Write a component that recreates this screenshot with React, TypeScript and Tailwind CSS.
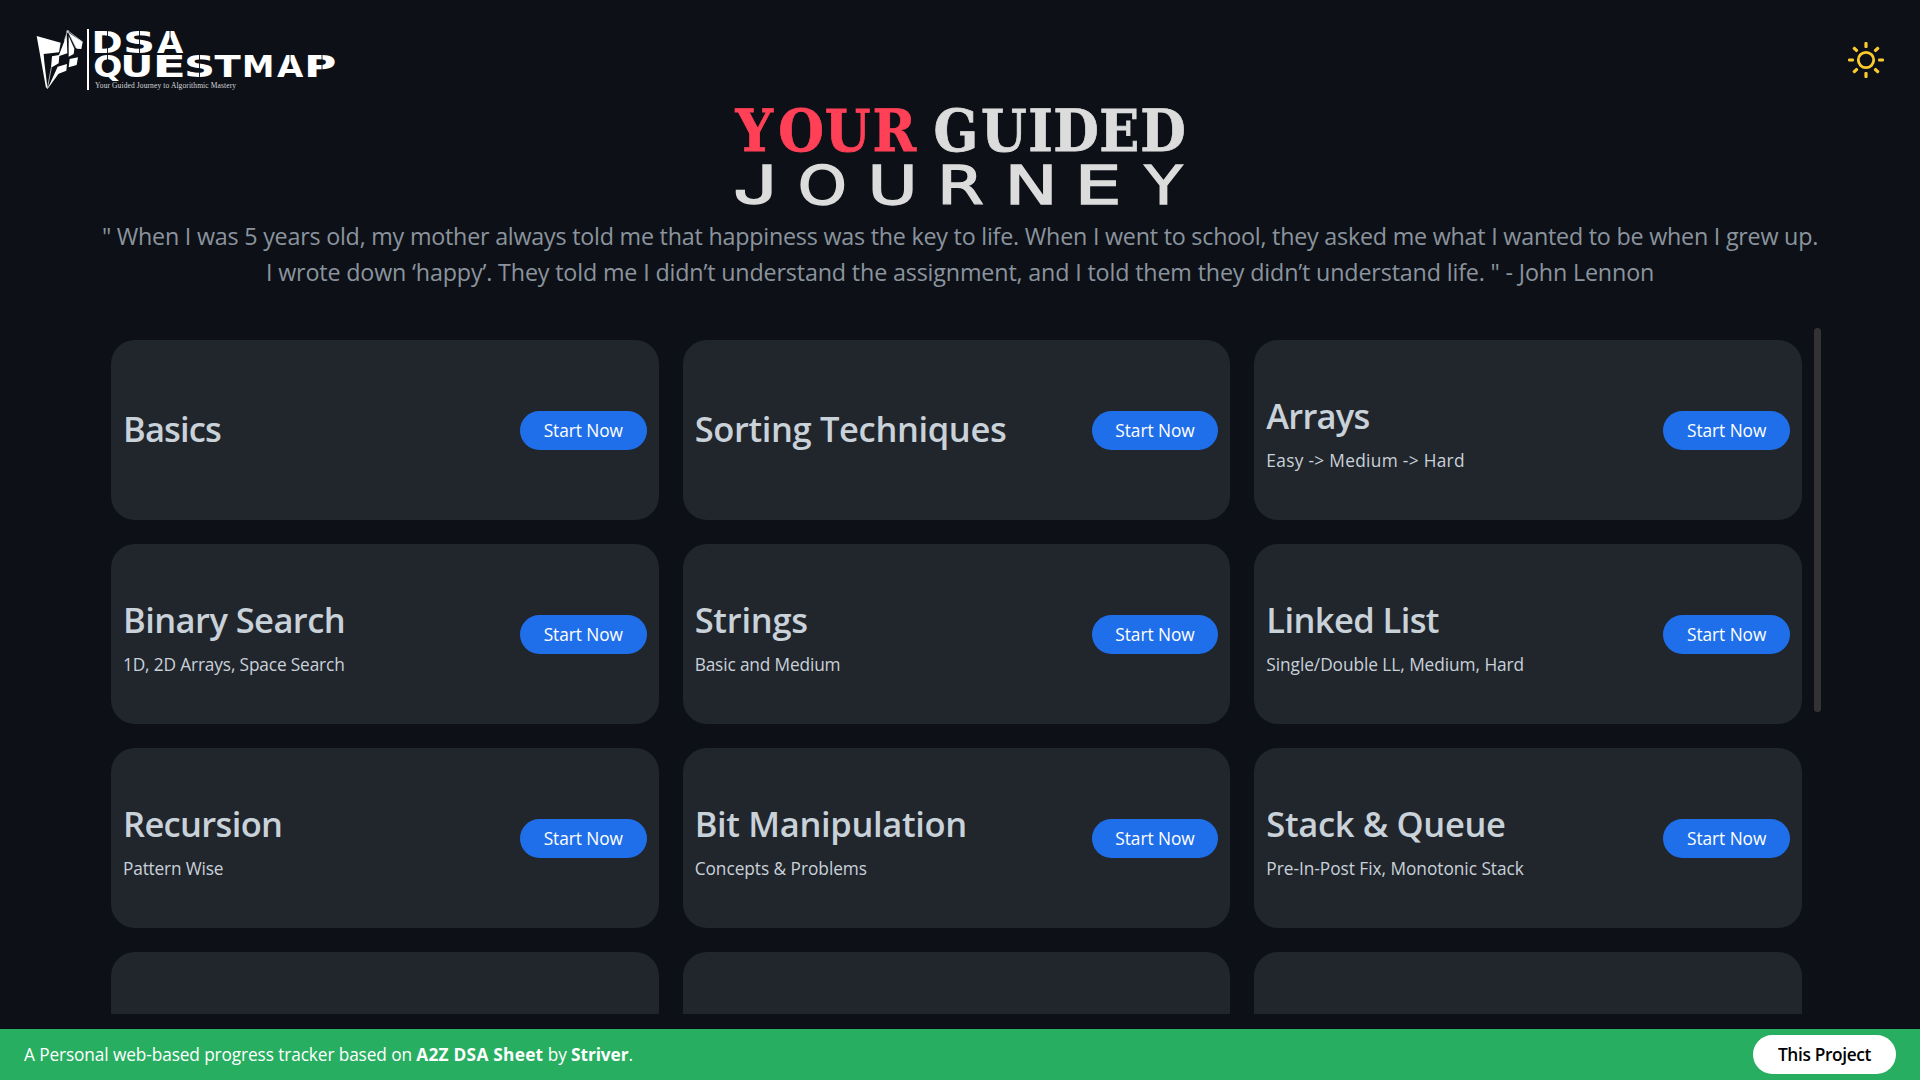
import React from 'react';

type Topic = { title: string; note?: string; titleClass: string; noteClass?: string };

const topics: Topic[] = [
  { title: 'Basics', titleClass: 'tracking-[-0.85px]' },
  { title: 'Sorting Techniques', titleClass: 'tracking-[-0.36px]' },
  { title: 'Arrays', titleClass: 'tracking-[-0.8px]', note: 'Easy -> Medium -> Hard', noteClass: 'tracking-[0.31px]' },
  { title: 'Binary Search', titleClass: 'tracking-[-0.56px]', note: '1D, 2D Arrays, Space Search', noteClass: 'tracking-[-0.15px]' },
  { title: 'Strings', titleClass: 'tracking-[-0.26px]', note: 'Basic and Medium', noteClass: 'tracking-[-0.15px]' },
  { title: 'Linked List', titleClass: 'tracking-[-0.6px]', note: 'Single/Double LL, Medium, Hard', noteClass: 'tracking-[-0.06px]' },
  { title: 'Recursion', titleClass: 'tracking-[-0.65px]', note: 'Pattern Wise', noteClass: 'tracking-[-0.18px]' },
  { title: 'Bit Manipulation', titleClass: 'tracking-[-0.34px]', note: 'Concepts & Problems', noteClass: 'tracking-[-0.04px]' },
  { title: 'Stack & Queue', titleClass: 'tracking-[-0.34px]', note: 'Pre-In-Post Fix, Monotonic Stack', noteClass: 'tracking-[-0.03px]' },
];

type Glyph = { c: string; x: number; w: number; font?: string };

/* Wide lettering: every character gets its own start and advance. */
function WideText({ glyphs, y, size, font, weight, className, strokeWidth }: {
  glyphs: Glyph[]; y: number; size: number; font: string; weight: number; className: string; strokeWidth?: number;
}) {
  return (
    <text y={y} fontSize={size} fontFamily={font} fontWeight={weight} strokeWidth={strokeWidth} className={className}>
      {glyphs.map((g, i) => (
        <tspan key={i} x={g.x} textLength={g.w} lengthAdjust="spacingAndGlyphs" fontFamily={g.font}>{g.c}</tspan>
      ))}
    </text>
  );
}

function Logo() {
  return (
    <svg width="300" height="64" viewBox="36 28 300 64" role="img" aria-label="DSA Questmap" className="overflow-visible">
      <g transform="translate(34 26) scale(0.3333)" className="fill-white">
        <path d="M8 30L80 50L75 79L29 84L31 108L40 184L36 186Z" />
        <path d="M54 91L75 87L91 46L98 24L100 82L76 90L74 112L51 125Z" />
        <path d="M104 30L121 68L119 84L104 92Z" />
        <path d="M104 20L146 48L142 69L128 68Z" />
        <path d="M107 99L132 94L128 117L104 124Z" />
        <path d="M71 122L99 114L97 134L72 144L42 186Z" />
        <path d="M101 14L91 44M101 14L146 48M101 14L126 66M40 188L52 125M40 188L75 140" fill="none" className="stroke-white" strokeWidth="2" />
        <circle cx="101" cy="17" r="4" className="fill-[#b8babd]" />
      </g>
      <rect x="87" y="29" width="2" height="61" className="fill-white" />
      <WideText
        y={52.8} size={29.5} font="DejaVu Sans" weight={700} className="fill-white"
        glyphs={[{ c: 'D', x: 91.6, w: 31.1 }, { c: 'S', x: 122.9, w: 32.3 }, { c: 'A', x: 157, w: 26.3 }]}
      />
      <WideText
        y={76.6} size={29.5} font="DejaVu Sans" weight={700} className="fill-white"
        glyphs={[
          { c: 'Q', x: 93.2, w: 29.1 }, { c: 'U', x: 120.3, w: 33.1 }, { c: 'E', x: 152.6, w: 33.5 },
          { c: 'S', x: 183.9, w: 31.1 }, { c: 'T', x: 214.5, w: 26.2 }, { c: 'M', x: 242.1, w: 32.3 },
          { c: 'A', x: 277, w: 26.3 }, { c: 'P', x: 304, w: 32.4 },
        ]}
      />
      <path d="M107.5 30V54M139.5 30V54M170 30V44M107.5 54V70M199.5 54V78M290 54V67M322 54V73" className="stroke-[#0d1117]" strokeWidth="0.9" />
      <text x="95" y="88.3" fontSize="7.5" fontFamily="Liberation Serif" textLength="141" className="fill-[#d5d7da]">
        Your Guided Journey to Algorithmic Mastery
      </text>
    </svg>
  );
}

function Sun() {
  return (
    <svg width="36" height="36" viewBox="-18 -18 36 36" fill="none" className="stroke-[#facc2e]">
      <circle r="7.7" strokeWidth="2.8" />
      {[0, 45, 90, 135, 180, 225, 270, 315].map((a) => (
        <rect key={a} x="-1.6" y="-18" width="3.2" height="6" rx="1.1" transform={`rotate(${a})`} className="fill-[#facc2e] stroke-none" />
      ))}
    </svg>
  );
}

function Banner() {
  return (
    <svg width="460" height="104" viewBox="-5 104 460 104" role="img" aria-label="Your guided journey" className="overflow-visible">
      <g transform="scale(0.905 1)" fontFamily="DejaVu Serif" fontWeight="700" fontSize="58" strokeWidth="0.8">
        <text y="151.5" x="0.6 47.7 99.2 151.9" className="fill-[#ff4057] stroke-[#ff4057]">YOUR</text>
        <text y="151.5" x="219.2 271.7 324.1 351.8 402.4 447.8" className="fill-[#dcdcdc] stroke-[#dcdcdc]">GUIDED</text>
      </g>
      <WideText
        y={204.2} size={54} font="DejaVu Sans" weight={400} strokeWidth={1.4} className="fill-[#dcdcdc] stroke-[#dcdcdc]"
        glyphs={[
          { c: 'J', x: -2, w: 44.4, font: 'Inter' }, { c: 'O', x: 62.8, w: 49.2 }, { c: 'U', x: 132.5, w: 50.2 },
          { c: 'R', x: 201.9, w: 46.9 }, { c: 'N', x: 269.6, w: 53.3 }, { c: 'E', x: 339.4, w: 47.1 }, { c: 'Y', x: 409.5, w: 37.9 },
        ]}
      />
    </svg>
  );
}

function TopicCard({ title, note, titleClass, noteClass }: Topic) {
  return (
    <article className="flex h-[180px] items-center justify-between rounded-3xl bg-[#21262d] px-3">
      <div className={note ? '' : 'pb-[3px]'}>
        <h2 className={`text-[34.5px] leading-10 font-semibold text-[#c9d1d9] ${titleClass}`}>{title}</h2>
        {note && <p className={`mt-4 -mb-[5px] text-[17.3px] leading-[18px] text-[#c9d1d9] ${noteClass}`}>{note}</p>}
      </div>
      <button className="h-[39px] w-[126.7px] rounded-full bg-[#1f6feb] pt-px text-[17.3px] tracking-[-0.05px] text-white">Start Now</button>
    </article>
  );
}

export default function App() {
  return (
    <div className="flex h-[1080px] w-[1920px] flex-col overflow-hidden bg-[#0d1117] font-['Open_Sans','Noto_Sans',sans-serif]">
      <header className="flex h-[104px] shrink-0 items-start justify-between pt-7 pr-9 pl-9">
        <Logo />
        <div className="pt-[14px]"><Sun /></div>
      </header>
      <div className="flex h-[114px] shrink-0 justify-center"><Banner /></div>
      <p className="shrink-0 text-center text-[23.3px] leading-9 whitespace-nowrap text-[#8b949e]">
        <span className="block tracking-[-0.225px]">" When I was 5 years old, my mother always told me that happiness was the key to life. When I went to school, they asked me what I wanted to be when I grew up.</span>
        <span className="block tracking-[-0.16px]">I wrote down ‘happy’. They told me I didn’t understand the assignment, and I told them they didn’t understand life. " - John Lennon</span>
      </p>
      <main className="mt-[38px] mr-[99px] ml-[111px] flex h-[686px] shrink-0 justify-between overflow-hidden">
        <div className="grid w-[1691px] auto-rows-[180px] grid-cols-3 gap-6 pt-3">
          {topics.map((t) => <TopicCard key={t.title} {...t} />)}
          {[0, 1, 2].map((i) => <div key={i} className="rounded-3xl bg-[#21262d]" />)}
        </div>
        <div className="h-96 w-[7px] rounded-full bg-[#333333]" />
      </main>
      <footer className="mt-auto flex h-[51px] shrink-0 items-center justify-between bg-[#27ae60] px-6 text-[17.3px] text-white">
        <p className="tracking-[-0.12px]">
          A Personal web-based progress tracker based on <b className="font-bold tracking-[0.25px]">A2Z DSA Sheet</b> by <b className="font-bold tracking-[-0.1px]">Striver</b>.
        </p>
        <button className="h-[39px] w-[143px] rounded-full bg-white font-semibold tracking-[-0.35px] text-black">This Project</button>
      </footer>
    </div>
  );
}
